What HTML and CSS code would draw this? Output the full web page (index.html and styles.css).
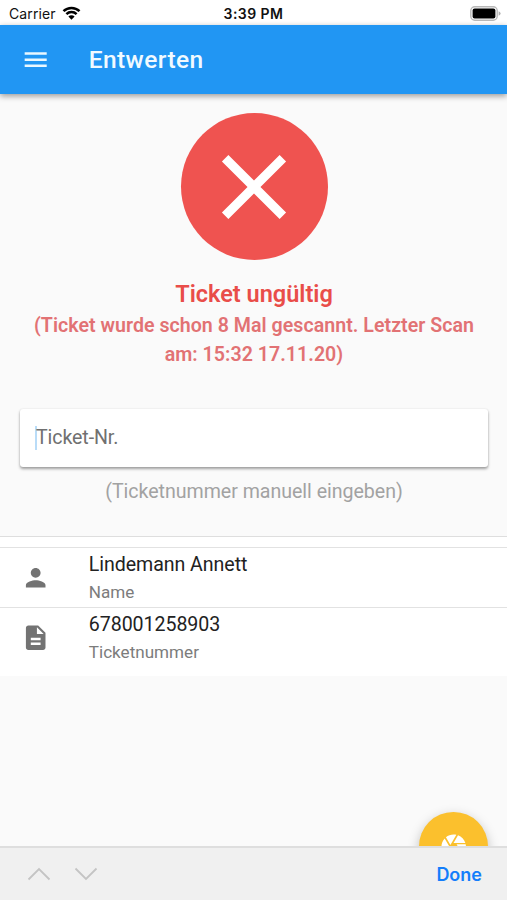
FILE: index.html
```html
<!DOCTYPE html>
<html lang="de">
<head>
<meta charset="utf-8">
<title>Entwerten</title>
<link rel="stylesheet" href="styles.css">
</head>
<body>
<div class="screen">
  <div class="status">
    <div class="status-left">
      <span class="carrier">Carrier</span>
      <svg class="wifi" viewBox="0 0 18 14"><g fill="none" stroke="#000" stroke-width="2.5"><path d="M1 5.200a11.300 11.300 0 0 1 16 0"/><path d="M3.900 8.200a7.200 7.200 0 0 1 10.200 0"/></g><path d="M9 13.800 5.900 10.500a4.400 4.400 0 0 1 6.200 0z"/></svg>
    </div>
    <span class="time">3:39 PM</span>
    <div class="status-right">
      <svg class="battery" viewBox="0 0 31 15"><rect x=".8" y=".8" width="26.4" height="13.4" rx="4" fill="#fff" stroke="#b8b8b8" stroke-width="1.4"/><rect x="2.6" y="2.6" width="22.8" height="9.8" rx="2"/><path d="M28.6 5.2q2 .7 2 2.3t-2 2.3z" fill="#b0b0b0"/></svg>
    </div>
  </div>
  <header class="appbar">
    <svg class="icon" viewBox="0 0 24 24"><path d="M3 18h18v-2H3v2zm0-5h18v-2H3v2zm0-7v2h18V6H3z"/></svg>
    <h1 class="title">Entwerten</h1>
  </header>
  <main class="content">
    <section class="result">
      <div class="disc"><svg class="cross" viewBox="0 0 24 24"><path d="M19 6.41L17.59 5 12 10.59 6.41 5 5 6.41 10.59 12 5 17.59 6.41 19 12 13.41 17.59 19 19 17.59 13.41 12z"/></svg></div>
      <h2 class="headline">Ticket ungültig</h2>
      <p class="detail">(Ticket wurde schon 8 Mal gescannt. Letzter Scan<br>am: 15:32 17.11.20)</p>
      <div class="field"><span class="caret"></span><span class="placeholder">Ticket-Nr.</span></div>
      <p class="hint">(Ticketnummer manuell eingeben)</p>
    </section>
    <div class="list">
      <div class="item">
        <svg class="icon" viewBox="0 0 24 24"><path d="M12 12c2.21 0 4-1.79 4-4s-1.79-4-4-4-4 1.79-4 4 1.79 4 4 4zm0 2c-2.67 0-8 1.34-8 4v2h16v-2c0-2.66-5.33-4-8-4z"/></svg>
        <div class="lines"><div class="primary">Lindemann Annett</div><div class="secondary">Name</div></div>
      </div>
      <div class="item last">
        <svg class="icon" viewBox="0 0 24 24"><path d="M14 2H6c-1.1 0-1.99.9-1.99 2L4 20c0 1.1.89 2 1.99 2H18c1.1 0 2-.9 2-2V8l-6-6zm2 16H8v-2h8v2zm0-4H8v-2h8v2zm-3-5V3.500L18.500 9H13z"/></svg>
        <div class="lines"><div class="primary">678001258903</div><div class="secondary">Ticketnummer</div></div>
      </div>
    </div>
  </main>
  <div class="fab"><svg class="icon" viewBox="0 0 24 24"><path d="M9.400 10.500l4.770-8.260C13.470 2.090 12.750 2 12 2c-2.400 0-4.600.85-6.320 2.250l3.660 6.350.06-.1zM21.540 9c-.92-2.920-3.150-5.260-6-6.340L11.880 9h9.660zm.26 1h-7.490l.29.5 4.760 8.250C21 16.970 22 14.610 22 12c0-.69-.07-1.350-.2-2zM8.540 12l-3.900-6.750C3.010 7.030 2 9.390 2 12c0 .69.07 1.350.2 2h7.490l-1.150-2zm-6.080 3c.92 2.920 3.150 5.260 6 6.340L12.120 15H2.460zm11.270 0l-3.900 6.760c.7.15 1.420.24 2.170.24 2.400 0 4.600-.85 6.320-2.250l-3.660-6.350-.93 1.600z"/></svg></div>
  <footer class="keybar">
    <div class="arrows">
      <svg class="chevron" viewBox="0 0 24 14"><path d="M1.500 12.500 12 2l10.500 10.500"/></svg>
      <svg class="chevron" viewBox="0 0 24 14"><path d="M1.500 1.500 12 12 22.500 1.500"/></svg>
    </div>
    <span class="done">Done</span>
  </footer>
</div>
</body>
</html>
```
FILE: styles.css
```css
* { box-sizing: border-box; }
body, h1, h2, p { margin: 0; }
body { font-family: Roboto, "Liberation Sans", sans-serif; background: #fafafa; }
svg { display: block; flex: none; }
.screen { position: relative; width: 507px; height: 900px; overflow: hidden; display: flex; flex-direction: column; background: #fafafa; }

.status { height: 25px; flex: none; display: grid; grid-template-columns: 1fr auto 1fr; align-items: center; padding: 2px 6px 0 9px; background: #fff; color: #111; font-family: Inter, sans-serif; font-size: 14px; line-height: 20px; }
.status-left { display: flex; align-items: center; gap: 6px; }
.carrier { letter-spacing: .1px; }
.wifi { width: 19px; height: 14px; margin-top: -2px; }
.time { font-weight: 600; font-size: 14px; letter-spacing: .45px; margin-left: -3px; }
.status-right { display: flex; justify-content: flex-end; }
.battery { width: 31px; height: 15px; margin-top: -1px; }

.icon { width: 29.4px; height: 29.4px; fill: #737373; }
.appbar { position: relative; height: 69px; flex: none; display: flex; align-items: center; gap: 38.6px; padding-left: 20.8px; background: #2196f3; box-shadow: 0 2px 6px rgba(0,0,0,.4); }
.appbar .icon { fill: #e9f8ff; }
.title { font-size: 24.5px; font-weight: 500; line-height: 30px; color: #f1faff; letter-spacing: .4px; }

.content { flex: 1; }
.result { height: 443px; padding: 19px 19px 0 20px; display: flex; flex-direction: column; align-items: center; text-align: center; border-bottom: 1px solid #dedede; }
.disc { width: 147px; height: 147px; flex: none; border-radius: 50%; background: #ef5350; display: grid; place-items: center; }
.cross { width: 110px; height: 110px; fill: #fff; }
.headline { margin-top: 18px; font-size: 23.5px; line-height: 32px; font-weight: 600; color: #e94d49; }
.detail { margin-top: 1px; font-size: 19.6px; line-height: 29.4px; font-weight: 600; letter-spacing: .03px; color: #e27274; white-space: nowrap; }
.field { width: 468px; height: 58px; margin-top: 39px; flex: none; padding: 1px 0 0 15px; display: flex; align-items: center; background: #fff; border-radius: 3px; box-shadow: 0 2px 3px rgba(0,0,0,.36), 0 0 2px rgba(0,0,0,.1); }
.caret { width: 2px; height: 24px; margin-right: -1px; background: #b9dcf8; }
.placeholder { font-size: 19.6px; line-height: 24px; letter-spacing: -.1px; color: #707070; }
.hint { margin-top: 13px; font-size: 19.6px; line-height: 24px; letter-spacing: -.03px; color: #a2a2a2; }

.list { padding-top: 10px; background: #fff; }
.item { height: 60px; display: flex; align-items: center; gap: 38.6px; padding-left: 20.8px; border-top: 1px solid #e2e2e2; }
.item.last { height: 69px; padding-bottom: 9px; }
.primary { font-size: 19.6px; line-height: 28px; letter-spacing: -.06px; color: #222; }
.secondary { font-size: 17.1px; line-height: 26px; color: #7c7c7c; }

.fab { position: absolute; left: 419px; top: 812px; width: 68.6px; height: 68.6px; border-radius: 50%; background: #fbc02d; box-shadow: 0 4px 12px rgba(0,0,0,.25); display: grid; place-items: center; }
.fab .icon { fill: #fff; }
.keybar { position: relative; height: 54px; flex: none; display: flex; align-items: center; justify-content: space-between; padding: 0 25px 0 27px; background: #f0f0f0; border-top: 2px solid #dedede; }
.arrows { display: flex; gap: 23px; }
.chevron { width: 24px; height: 14px; fill: none; stroke: #c4c4c4; stroke-width: 1.8; }
.done { margin-top: 1px; font-family: Inter, sans-serif; font-size: 18px; line-height: 24px; font-weight: 600; color: #147efb; }
```
